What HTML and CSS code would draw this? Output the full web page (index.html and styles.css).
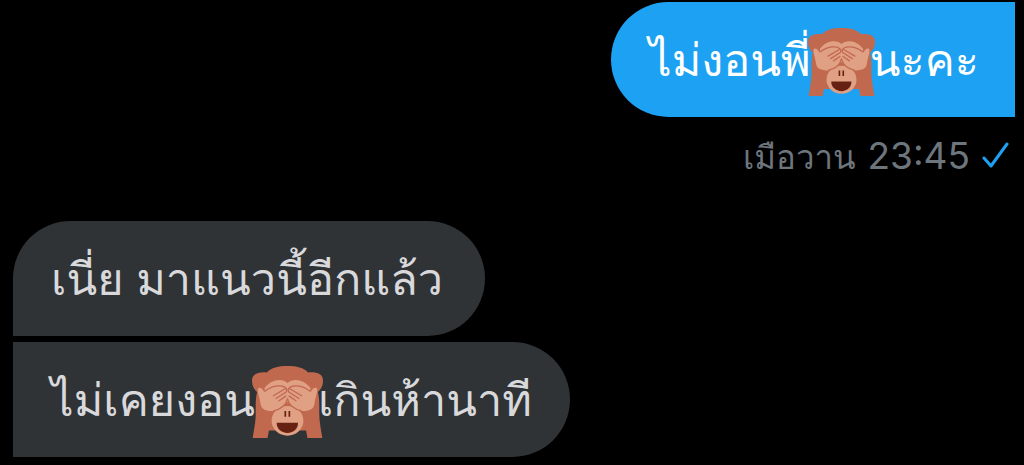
FILE: index.html
```html
<!DOCTYPE html>
<html lang="th">
<head>
<meta charset="utf-8">
<meta name="viewport" content="width=device-width, initial-scale=1">
<title>ข้อความ</title>
<link rel="stylesheet" href="styles.css">
</head>
<body>
<svg class="symbols" aria-hidden="true">
  <symbol id="monkey" viewBox="35 33 210 213">
    <path fill="#c1694f" d="M35 76C35 57 52 50 79 52C92 38 113 33 140 33S188 38 201 52C228 50 245 57 245 76C245 93 238 103 230 110C235 130 234 150 234 175C234 200 240 225 243 246H199L195 224H85L81 246H37C40 225 46 200 46 175C46 150 45 130 50 110C42 103 35 93 35 76Z"/>
    <path fill="#e0a084" d="M140 83C124 68 90 72 72 99L77 140L203 140L208 99C190 72 156 68 140 83Z"/>
    <ellipse fill="#e0a084" cx="140" cy="195" rx="47" ry="44"/>
    <g id="hand">
      <path fill="#e0a084" d="M54 98C61 95 67 101 71 110C85 97 106 90 120 92C134 93 142 103 140 113V130C137 150 116 166 94 166C72 166 61 158 60 143C58 127 48 103 54 98Z"/>
      <path class="line" d="M74 107C88 96 106 91 120 92C134 93 142 103 136 110L106 129M132 101L98 121M135 122L115 136M140 130C136 148 120 162 100 165"/>
    </g>
    <use href="#hand" transform="matrix(-1 0 0 1 280 0)"/>
    <path fill="#662113" d="M131 166h5v17h-5zM143 166h5v17h-5zM108 201H171C172 218 158 231 140 231S107 218 108 201Z"/>
  </symbol>
</svg>
<main class="chat">
  <section class="sent">
    <p class="bubble bubble-sent">ไม่งอนพี่<svg class="emoji" role="img" aria-label="ลิงปิดตา"><use href="#monkey"/></svg>นะคะ</p>
    <p class="meta">
      <span class="day">เมือวาน</span>
      <time>23:45</time>
      <svg class="tick" viewBox="0 0 28 28" role="img" aria-label="ส่งแล้ว"><path d="M2 17L9 25L25 3"/></svg>
    </p>
  </section>
  <section class="received">
    <p class="bubble bubble-first">เนี่ย มาแนวนี้อีกแล้ว</p>
    <p class="bubble bubble-last">ไม่เคยงอน<svg class="emoji emoji-large" role="img" aria-label="ลิงปิดตา"><use href="#monkey"/></svg>เกินห้านาที</p>
  </section>
</main>
</body>
</html>
```
FILE: styles.css
```css
body {
  margin: 0;
  background: #000;
  font-family: Inter, Loma, Garuda, sans-serif;
}

.symbols {
  display: block;
  width: 0;
  height: 0;
}

.chat {
  display: flex;
  flex-direction: column;
  gap: 41px;
  padding: 2px 9px 7px 13px;
}

.sent,
.received {
  display: flex;
  flex-direction: column;
}

.sent {
  align-items: flex-end;
  gap: 16px;
}

.received {
  align-items: flex-start;
  gap: 6px;
}

.bubble {
  display: flex;
  align-items: center;
  margin: 0;
  padding: 26px 38px 25px;
  color: #d9d9dc;
  background: #2f3336;
  font-size: 45px;
  line-height: 64px;
}

.bubble-sent {
  padding-right: 36px;
  color: #fff;
  background: #1da1f2;
  border-radius: 58px 0 0 58px;
}

.bubble-first {
  padding-right: 42px;
  border-radius: 58px 58px 58px 0;
}

.bubble-last {
  border-radius: 0 58px 58px 0;
}

.emoji {
  flex: none;
  width: 67px;
  height: 68px;
  margin: -4px -5px -8px -3px;
}

.emoji-large {
  width: 71px;
  height: 72px;
}

.line {
  fill: none;
  stroke: #c1694f;
  stroke-width: 4;
  stroke-linecap: round;
}

.meta {
  display: flex;
  align-items: baseline;
  gap: 12px;
  margin: 0;
  padding-right: 5px;
  color: #6e767d;
  font-size: 33px;
  line-height: 46px;
}

.meta time {
  font-size: 37px;
}

.tick {
  width: 28px;
  height: 28px;
  fill: none;
  stroke: #1da1f2;
  stroke-width: 3;
  stroke-linecap: round;
  stroke-linejoin: round;
}
```
